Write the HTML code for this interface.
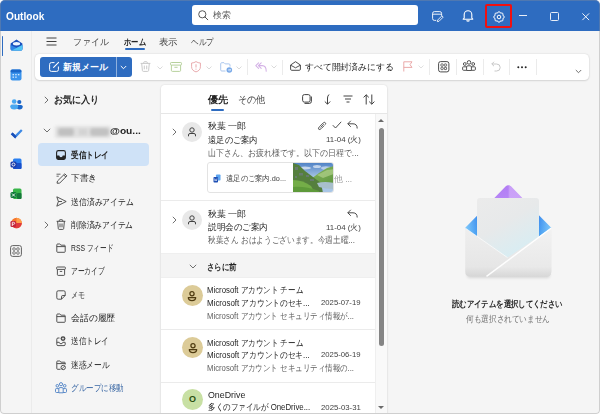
<!DOCTYPE html>
<html lang="ja"><head><meta charset="utf-8">
<style>
*{box-sizing:border-box}
html,body{margin:0;padding:0}
body{width:600px;height:414px;overflow:hidden;position:relative;background:#fdfdfd;font-family:"Liberation Sans",sans-serif;color:#242424}
.a{position:absolute}
.t{position:absolute;white-space:nowrap;line-height:12px;font-size:9.3px}
#win{position:absolute;left:0;top:0;width:600px;height:414px;border-radius:5px 5px 4px 4px;background:#f5f5f5;overflow:hidden}
#title{position:absolute;left:0;top:0;width:600px;height:31px;background:#2e6cc0}
svg{position:absolute;overflow:visible}
.sep{position:absolute;width:1px;background:#ebebeb}
.g{color:#616161}
.b{font-weight:bold}
</style></head><body>
<div id="win">
 <!-- TITLE BAR -->
 <div id="title">
  <div class="t" style="transform:scaleX(1.014);transform-origin:0 50%;--w:38.3;left:5.6px;top:10.8px;color:#fff;font-weight:bold;font-size:10px;line-height:12px">Outlook</div>
  <div class="a" style="left:192px;top:5px;width:226px;height:20px;background:#fff;border-radius:3px"></div>
  <svg style="left:197.5px;top:10px" width="11" height="10.5" viewBox="0 0 11 10.5"><circle cx="4.3" cy="4.3" r="3.6" fill="none" stroke="#505050" stroke-width="0.95"/><path d="M6.9 6.9L9.8 9.8" stroke="#505050" stroke-width="1" stroke-linecap="round"/></svg>
  <div class="t" style="transform:scaleX(0.989);transform-origin:0 50%;--w:17.8;left:212.6px;top:9.3px;color:#616161;font-size:9px">検索</div>
  <!-- note icon -->
  <svg style="left:431.5px;top:10.5px" width="12" height="11" viewBox="0 0 12 11"><path d="M9.6 4.8V2.4Q9.6 0.6 7.8 0.6H2.4Q0.6 0.6 0.6 2.4V7.6Q0.6 9.4 2.4 9.4H4.2M0.6 3.2H9.6" fill="none" stroke="#fff" stroke-width="0.9"/><path d="M5.3 10.6L5.7 9L9.9 4.8L11.2 6.1L7 10.3Z" fill="none" stroke="#fff" stroke-width="0.85" stroke-linejoin="round"/></svg>
  <!-- bell -->
  <svg style="left:462px;top:9px" width="12" height="13" viewBox="0 0 12 13"><path d="M2.2 9V5.5A3.8 3.8 0 0 1 9.8 5.5V9L10.8 10.2H1.2Z" fill="none" stroke="#fff" stroke-width="1.1" stroke-linejoin="round"/><path d="M4.5 11.5Q6 12.8 7.5 11.5" fill="none" stroke="#fff" stroke-width="1.1"/></svg>
  <!-- gear highlight -->
  <div class="a" style="left:485px;top:4px;width:27px;height:24px;border:2.4px solid #f01010;border-radius:2px"></div>
  <svg style="left:493px;top:11px" width="12" height="12" viewBox="0 0 12 12"><path d="M6 0.7Q7 0.7 7.2 1.8Q7.6 2 8 2.2Q9 1.6 9.7 2.3Q10.4 3 9.8 4Q10 4.4 10.2 4.8Q11.3 5 11.3 6Q11.3 7 10.2 7.2Q10 7.6 9.8 8Q10.4 9 9.7 9.7Q9 10.4 8 9.8Q7.6 10 7.2 10.2Q7 11.3 6 11.3Q5 11.3 4.8 10.2Q4.4 10 4 9.8Q3 10.4 2.3 9.7Q1.6 9 2.2 8Q2 7.6 1.8 7.2Q0.7 7 0.7 6Q0.7 5 1.8 4.8Q2 4.4 2.2 4Q1.6 3 2.3 2.3Q3 1.6 4 2.2Q4.4 2 4.8 1.8Q5 0.7 6 0.7Z" fill="none" stroke="#fff" stroke-width="1" stroke-linejoin="round"/><circle cx="6" cy="6" r="1.8" fill="none" stroke="#fff" stroke-width="1"/></svg>
  <!-- window controls -->
  <div class="a" style="left:519px;top:15px;width:8px;height:1.2px;background:#e8eef8"></div>
  <div class="a" style="left:550px;top:12px;width:8.5px;height:8.5px;border:1.1px solid #e8eef8;border-radius:1.5px"></div>
  <svg style="left:581.5px;top:12.5px" width="7.5" height="7.5" viewBox="0 0 7.5 7.5"><path d="M0.4 0.4L7.1 7.1M7.1 0.4L0.4 7.1" stroke="#f0f4fa" stroke-width="1"/></svg>
 </div>

 <!-- LEFT RAIL -->
 <div class="sep" style="left:31px;top:31px;height:382px;background:#ebebeb"></div>
 <div class="a" style="left:1.8px;top:35.5px;width:1.6px;height:20.5px;background:#2e6cc0;border-radius:1px"></div>
 <!-- mail icon -->
 <svg style="left:10px;top:38.5px" width="13" height="12" viewBox="0 0 13 12"><path d="M0.6 4.6L6.5 0.5L12.4 4.6V10Q12.4 11.6 10.8 11.6H2.2Q0.6 11.6 0.6 10Z" fill="#1c52bd"/><ellipse cx="6.5" cy="4.8" rx="3.6" ry="1.7" fill="#eef6ff"/><path d="M0.6 6L6.5 8.8L12.4 6V10Q12.4 11.6 10.8 11.6H2.2Q0.6 11.6 0.6 10Z" fill="#2f86e6"/><path d="M1.6 11.4L12.4 6V10Q12.4 11.6 10.8 11.6H2.2Z" fill="#52c6f6"/></svg>
 <!-- calendar -->
 <svg style="left:10px;top:69px" width="12" height="12" viewBox="0 0 12 12"><rect x="0.5" y="0.5" width="11" height="11" rx="2" fill="#3b93ec"/><rect x="0.5" y="0.5" width="11" height="3" rx="1.5" fill="#1b67c9"/><g fill="#cfe6ff"><rect x="2.5" y="5" width="1.5" height="1.3"/><rect x="5.2" y="5" width="1.5" height="1.3"/><rect x="7.9" y="5" width="1.5" height="1.3"/><rect x="2.5" y="7.5" width="1.5" height="1.3"/><rect x="5.2" y="7.5" width="1.5" height="1.3"/></g></svg>
 <!-- people -->
 <svg style="left:10px;top:99px" width="13" height="11" viewBox="0 0 13 11"><circle cx="9.3" cy="3" r="2.1" fill="#1b67c9"/><path d="M6.5 7.5Q6.5 6 8 6H11Q12.7 6 12.7 7.5Q12.7 10.5 9.5 10.5Q6.5 10.5 6.5 7.5Z" fill="#1b67c9"/><circle cx="4.2" cy="2.5" r="2.3" fill="#4aa8f0"/><path d="M0.3 7.2Q0.3 5.6 2 5.6H6.4Q8.1 5.6 8.1 7.2Q8.1 10.5 4.2 10.5Q0.3 10.5 0.3 7.2Z" fill="#4aa8f0"/></svg>
 <!-- todo check -->
 <svg style="left:10px;top:128px" width="13" height="11" viewBox="0 0 13 11"><path d="M0.8 6.2L2.6 4.4L5.2 7L11 1.2L12.6 2.8L5.2 10.4Z" fill="#3e8ae5"/><path d="M0.8 6.2L2.6 4.4L6.5 8.2L5.2 10.4Z" fill="#1b4fb8"/></svg>
 <!-- outlook -->
 <svg style="left:10px;top:158px" width="12" height="12" viewBox="0 0 12 12"><rect x="3" y="0.5" width="8.5" height="10.5" rx="1.5" fill="#2a7ff0"/><rect x="3" y="5" width="8.5" height="6" rx="1" fill="#1a4fc9"/><rect x="0.5" y="3.5" width="6" height="6" rx="1.5" fill="#1a3aa8"/><circle cx="3.5" cy="6.5" r="1.5" fill="none" stroke="#fff" stroke-width="0.9"/></svg>
 <!-- excel -->
 <svg style="left:10px;top:188px" width="12" height="12" viewBox="0 0 12 12"><rect x="3" y="0.5" width="8.5" height="10.5" rx="1.5" fill="#39b54a"/><rect x="7" y="5" width="4.5" height="6" rx="1" fill="#16773a"/><rect x="0.5" y="4" width="6" height="6" rx="1.5" fill="#117a3a"/><path d="M2 5.5L5 8.5M5 5.5L2 8.5" stroke="#fff" stroke-width="0.9"/></svg>
 <!-- ppt -->
 <svg style="left:10px;top:217px" width="12" height="12" viewBox="0 0 12 12"><circle cx="6.5" cy="6" r="5.3" fill="#f5752b"/><path d="M6.5 0.7A5.3 5.3 0 0 1 11.8 6H6.5Z" fill="#ff9e4a"/><path d="M1.2 6A5.3 5.3 0 0 0 11.8 6Z" fill="#e0393e"/><rect x="0.5" y="4" width="5.5" height="6" rx="1.3" fill="#c4253b"/><path d="M2.3 9V5.3H3.6Q4.7 5.3 4.7 6.3Q4.7 7.3 3.6 7.3H2.3" fill="none" stroke="#fff" stroke-width="0.8"/></svg>
 <!-- apps -->
 <svg style="left:10px;top:245px" width="12" height="12" viewBox="0 0 12 12"><rect x="0.6" y="0.6" width="10.8" height="10.8" rx="2" fill="none" stroke="#616161" stroke-width="1"/><g fill="none" stroke="#616161" stroke-width="0.9"><rect x="2.8" y="2.8" width="2.5" height="2.5" rx="1"/><rect x="6.7" y="2.8" width="2.5" height="2.5" rx="1"/><rect x="2.8" y="6.7" width="2.5" height="2.5" rx="1"/><rect x="6.7" y="6.7" width="2.5" height="2.5" rx="1"/></g></svg>

 <!-- MENU ROW -->
 <svg style="left:46px;top:37px" width="11" height="9" viewBox="0 0 11 9"><path d="M0.5 1H10.5M0.5 4.5H10.5M0.5 8H10.5" stroke="#424242" stroke-width="1"/></svg>
 <div class="t" style="transform:scaleX(0.994);transform-origin:0 50%;--w:35.8;left:72.6px;top:36px;color:#424242">ファイル</div>
 <div class="t b" style="transform:scaleX(0.807);transform-origin:0 50%;--w:21.8;left:123.6px;top:36px;color:#242424">ホーム</div>
 <div class="a" style="left:125px;top:48px;width:20px;height:2px;background:#2e6cc0;border-radius:1px"></div>
 <div class="t" style="transform:scaleX(1.044);transform-origin:0 50%;--w:18.8;left:158.6px;top:36px;color:#424242">表示</div>
 <div class="t" style="transform:scaleX(0.844);transform-origin:0 50%;--w:22.8;left:190.6px;top:36px;color:#424242">ヘルプ</div>

 <!-- RIBBON -->
 <div class="a" style="left:34.5px;top:54px;width:554px;height:26px;background:#fff;border-radius:4.5px;box-shadow:0 0 2px rgba(0,0,0,0.14),0 1px 2px rgba(0,0,0,0.1)"></div>
 <div class="a" style="left:40px;top:57px;width:92px;height:20px;background:#2e6cc0;border-radius:3px"></div>
 <div class="a" style="left:116px;top:57px;width:1px;height:20px;background:#8fb1de"></div>
 <svg style="left:49px;top:62px" width="10" height="10" viewBox="0 0 10 10"><path d="M5.5 0.6H2.4Q0.6 0.6 0.6 2.4V7.6Q0.6 9.4 2.4 9.4H7.6Q9.4 9.4 9.4 7.6V4.5" fill="none" stroke="#fff" stroke-width="1"/><path d="M9.6 0.4L4.6 5.4" stroke="#fff" stroke-width="1.1" stroke-linecap="round"/></svg>
 <div class="t" style="transform:scaleX(1);transform-origin:0 50%;--w:45.0;left:62.6px;top:61px;color:#fff;font-size:9px;font-weight:bold">新規メール</div>
 <svg style="left:120px;top:65px" width="7" height="5" viewBox="0 0 7 5"><path d="M0.8 1L3.5 3.7L6.2 1" fill="none" stroke="#fff" stroke-width="1"/></svg>
 <!-- trash -->
 <svg style="left:140px;top:61px" width="11" height="11" viewBox="0 0 11 11"><path d="M0.6 2.4H10.4M3.7 2.4V1.6Q3.7 0.7 4.6 0.7H6.4Q7.3 0.7 7.3 1.6V2.4M1.7 2.4L2.4 9.5Q2.5 10.4 3.4 10.4H7.6Q8.5 10.4 8.6 9.5L9.3 2.4M4.3 4.6V8.3M6.7 4.6V8.3" fill="none" stroke="#c6c6c6" stroke-width="0.95"/></svg>
 <svg style="left:156.5px;top:66px" width="6" height="4" viewBox="0 0 6 4"><path d="M0.5 0.5L3 3L5.5 0.5" fill="none" stroke="#d0d0d0" stroke-width="0.8"/></svg>
 <!-- archive -->
 <svg style="left:169.5px;top:61.5px" width="12" height="10" viewBox="0 0 12 10"><rect x="0.5" y="0.5" width="11" height="2.6" rx="0.8" fill="none" stroke="#b3cf98" stroke-width="0.95"/><path d="M1.4 3.1V8.4Q1.4 9.4 2.4 9.4H9.6Q10.6 9.4 10.6 8.4V3.1M4.4 5.3H7.6" fill="none" stroke="#b3cf98" stroke-width="0.95"/></svg>
 <!-- shield -->
 <svg style="left:191px;top:61px" width="10" height="11.5" viewBox="0 0 10 11.5"><path d="M5 0.6Q7 2 9.4 2V5.8Q9.4 9.5 5 10.9Q0.6 9.5 0.6 5.8V2Q3 2 5 0.6Z" fill="none" stroke="#e8a6aa" stroke-width="0.95"/><path d="M5 3.3V6.5" stroke="#e8a6aa" stroke-width="1"/><circle cx="5" cy="8.1" r="0.6" fill="#e8a6aa"/></svg>
 <svg style="left:206px;top:66px" width="6" height="4" viewBox="0 0 6 4"><path d="M0.5 0.5L3 3L5.5 0.5" fill="none" stroke="#d0d0d0" stroke-width="0.8"/></svg>
 <!-- move -->
 <svg style="left:219.5px;top:62px" width="12.5" height="11" viewBox="0 0 12.5 11"><path d="M5.5 9H1.8Q0.7 9 0.7 7.9V1.8Q0.7 0.7 1.8 0.7H4L5.2 1.9H8.9Q10 1.9 10 3V4.6" fill="none" stroke="#a8c4ec" stroke-width="0.95"/><circle cx="9.3" cy="8" r="2.8" fill="#7aaae8"/><path d="M8 8H10.6M9.7 7.1L10.6 8L9.7 8.9" fill="none" stroke="#fff" stroke-width="0.7"/></svg>
 <svg style="left:236px;top:66px" width="6" height="4" viewBox="0 0 6 4"><path d="M0.5 0.5L3 3L5.5 0.5" fill="none" stroke="#d0d0d0" stroke-width="0.8"/></svg>
 <div class="sep" style="left:247px;top:59px;height:16px"></div>
 <!-- reply all -->
 <svg style="left:254.5px;top:62px" width="12" height="10" viewBox="0 0 12 10"><path d="M3.6 0.8L0.8 3.6L3.6 6.4M6.2 0.8L3.4 3.6L6.2 6.4M3.4 3.6H7.2Q11.2 3.6 11.2 9.2" fill="none" stroke="#d4b2e6" stroke-width="1.05" stroke-linejoin="round" stroke-linecap="round"/></svg>
 <svg style="left:271px;top:65px" width="6" height="4" viewBox="0 0 6 4"><path d="M0.5 0.5L3 3L5.5 0.5" fill="none" stroke="#d0d0d0" stroke-width="0.8"/></svg>
 <div class="sep" style="left:282px;top:59.5px;height:15px"></div>
 <!-- mark read -->
 <svg style="left:290px;top:61px" width="11" height="10" viewBox="0 0 11 10"><path d="M0.6 4L5.5 0.7L10.4 4V8.2Q10.4 9.3 9.3 9.3H1.7Q0.6 9.3 0.6 8.2Z" fill="none" stroke="#424242" stroke-width="0.95"/><path d="M0.8 4.3L5.5 6.8L10.2 4.3" fill="none" stroke="#424242" stroke-width="0.9"/></svg>
 <div class="t" style="transform:scaleX(0.984);transform-origin:0 50%;--w:88.6;left:304.6px;top:61px;color:#242424">すべて開封済みにする</div>
 <!-- flag -->
 <svg style="left:403px;top:61px" width="10" height="11" viewBox="0 0 10 11"><path d="M0.8 10.5V0.8H9L7 3.6L9 6.4H0.8" fill="none" stroke="#e8a0a0" stroke-width="0.9" stroke-linejoin="round"/></svg>
 <svg style="left:418px;top:65px" width="6" height="4" viewBox="0 0 6 4"><path d="M0.5 0.5L3 3L5.5 0.5" fill="none" stroke="#d8d8d8" stroke-width="0.8"/></svg>
 <div class="sep" style="left:429px;top:59px;height:16px"></div>
 <!-- grid -->
 <svg style="left:437.5px;top:61.3px" width="11.5" height="11.5" viewBox="0 0 11.5 11.5"><rect x="0.6" y="0.6" width="10.3" height="10.3" rx="2" fill="none" stroke="#424242" stroke-width="0.95"/><g fill="none" stroke="#424242" stroke-width="0.8"><rect x="2.9" y="2.9" width="2.3" height="2.3" rx="0.6"/><rect x="6.3" y="2.9" width="2.3" height="2.3" rx="0.6"/><rect x="2.9" y="6.3" width="2.3" height="2.3" rx="0.6"/><rect x="6.3" y="6.3" width="2.3" height="2.3" rx="0.6"/></g></svg>
 <div class="sep" style="left:456px;top:59px;height:16px"></div>
 <!-- people group -->
 <svg style="left:462px;top:60px" width="14" height="12" viewBox="0 0 14 12"><g fill="none" stroke="#424242" stroke-width="0.9"><circle cx="7" cy="2.4" r="1.8"/><circle cx="2.8" cy="4" r="1.4"/><circle cx="11.2" cy="4" r="1.4"/><path d="M4.6 10.5V7Q4.6 5.8 5.8 5.8H8.2Q9.4 5.8 9.4 7V10.5Z"/><path d="M4.6 10.3H1.6Q0.6 10.3 0.6 9.3V7.5Q0.6 6.8 1.4 6.8H4.6M9.4 10.3H12.4Q13.4 10.3 13.4 9.3V7.5Q13.4 6.8 12.6 6.8H9.4"/></g></svg>
 <div class="sep" style="left:483px;top:59px;height:16px"></div>
 <!-- undo -->
 <svg style="left:491px;top:61px" width="10" height="11" viewBox="0 0 10 11"><path d="M3 0.8L0.8 3L3 5.2M0.8 3H5.5Q9.2 3 9.2 6.5Q9.2 10 5.5 10H3.5" fill="none" stroke="#c8c8c8" stroke-width="1"/></svg>
 <div class="sep" style="left:509px;top:59px;height:16px"></div>
 <svg style="left:517px;top:66px" width="10" height="3" viewBox="0 0 10 3"><g fill="#242424"><circle cx="1.3" cy="1.3" r="1"/><circle cx="5" cy="1.3" r="1"/><circle cx="8.7" cy="1.3" r="1"/></g></svg>
 <div class="sep" style="left:536px;top:59px;height:16px"></div>
 <svg style="left:575px;top:69px" width="7" height="5" viewBox="0 0 7 5"><path d="M0.8 1L3.5 3.7L6.2 1" fill="none" stroke="#616161" stroke-width="0.9"/></svg>

 <!-- FOLDER PANE -->
 <svg style="left:44px;top:96px" width="5" height="8" viewBox="0 0 5 8"><path d="M0.8 0.8L4 4L0.8 7.2" fill="none" stroke="#616161" stroke-width="0.9"/></svg>
 <div class="t b" style="transform:scaleX(0.902);transform-origin:0 50%;--w:45.1;left:53.9px;top:94px;font-size:9.5px">お気に入り</div>
 <svg style="left:43px;top:128px" width="8" height="5" viewBox="0 0 8 5"><path d="M0.8 0.8L4 4L7.2 0.8" fill="none" stroke="#616161" stroke-width="0.9"/></svg>
 <div class="a" style="left:54.5px;top:126px;width:56px;height:12px;background:#e0e0e0;filter:blur(1.8px);border-radius:2px"><div class="a" style="left:3px;top:2px;width:16px;height:8px;background:#c0c0c0;border-radius:3px"></div><div class="a" style="left:24px;top:3px;width:8px;height:6px;background:#d2d2d2"></div><div class="a" style="left:35px;top:2px;width:19px;height:8px;background:#c2c2c2;border-radius:3px"></div></div>
 <div class="t b" style="transform:scaleX(1.07);transform-origin:0 50%;--w:30.8;left:109.6px;top:125px;font-size:9.5px">@ou...</div>
 <div class="a" style="left:38px;top:143px;width:111px;height:23px;background:#cfe2f7;border-radius:4px"></div>
 <svg style="left:56px;top:150px" width="10" height="10" viewBox="0 0 10 10"><rect x="0.6" y="0.6" width="8.8" height="8.8" rx="1.8" fill="none" stroke="#242424" stroke-width="1.1"/><path d="M0.6 5.5H3.2Q3.5 7.3 5 7.3Q6.5 7.3 6.8 5.5H9.4V8Q9.4 9.4 8 9.4H2Q0.6 9.4 0.6 8Z" fill="#242424"/></svg>
 <div class="t b" style="transform:scaleX(0.844);transform-origin:0 50%;--w:38.0;left:71.2px;top:149px">受信トレイ</div>
 <svg style="left:55.5px;top:173px" width="12" height="11" viewBox="0 0 12 11"><path d="M1 10.2L1.5 8L8.8 0.8L10.9 2.9L3.6 10.2Z M7.7 1.9L9.8 4" fill="none" stroke="#424242" stroke-width="0.9" stroke-linejoin="round"/><path d="M0.5 1.2H4.5M0.5 3.2H2.8" stroke="#424242" stroke-width="0.8"/></svg>
 <div class="t" style="transform:scaleX(0.967);transform-origin:0 50%;--w:26.1;left:71.3px;top:172.3px">下書き</div>
<svg style="left:56px;top:196.2px" width="11" height="11" viewBox="0 0 11 11"><path d="M0.8 0.8L10.2 5.5L0.8 10.2L2.4 5.5Z M2.4 5.5H6" fill="none" stroke="#424242" stroke-width="0.9" stroke-linejoin="round"/></svg>
 <div class="t" style="transform:scaleX(0.871);transform-origin:0 50%;--w:62.7;left:71.3px;top:195.7px">送信済みアイテム</div>
<svg style="left:56px;top:219.3px" width="10" height="11" viewBox="0 0 10 11"><path d="M0.6 2.3H9.4M3.3 2.3V1.5Q3.3 0.7 4.1 0.7H5.9Q6.7 0.7 6.7 1.5V2.3M1.6 2.3L2.3 9.6Q2.4 10.4 3.2 10.4H6.8Q7.6 10.4 7.7 9.6L8.4 2.3M4 4.5V8.3M6 4.5V8.3" fill="none" stroke="#424242" stroke-width="0.9"/></svg>
 <div class="t" style="transform:scaleX(0.863);transform-origin:0 50%;--w:62.1;left:71.3px;top:219.0px">削除済みアイテム</div>
<svg style="left:56px;top:243.0px" width="10" height="10" viewBox="0 0 10 10"><path d="M0.8 8.5V1.8Q0.8 1 1.6 1H3.8L5 2.2H8.4Q9.2 2.2 9.2 3V8.5Q9.2 9.3 8.4 9.3H1.6Q0.8 9.3 0.8 8.5Z M0.8 3.6H9.2" fill="none" stroke="#424242" stroke-width="0.9"/></svg>
 <div class="t" style="transform:scaleX(0.73);transform-origin:0 50%;--w:42.1;left:71.3px;top:242.0px">RSS フィード</div>
<svg style="left:56px;top:266.3px" width="10" height="10" viewBox="0 0 10 10"><rect x="0.6" y="1" width="8.8" height="2.4" rx="0.8" fill="none" stroke="#424242" stroke-width="0.9"/><path d="M1.4 3.4V8.6Q1.4 9.4 2.2 9.4H7.8Q8.6 9.4 8.6 8.6V3.4M3.8 5.4H6.2" fill="none" stroke="#424242" stroke-width="0.9"/></svg>
 <div class="t" style="transform:scaleX(0.747);transform-origin:0 50%;--w:33.6;left:71.1px;top:265.3px">アーカイブ</div>
<svg style="left:56px;top:289.6px" width="10" height="10" viewBox="0 0 10 10"><path d="M0.8 2.2Q0.8 0.8 2.2 0.8H7.8Q9.2 0.8 9.2 2.2V5.5L5.5 9.2H2.2Q0.8 9.2 0.8 7.8Z M5.5 9.2V6.8Q5.5 5.5 6.8 5.5H9.2" fill="none" stroke="#424242" stroke-width="0.9" stroke-linejoin="round"/></svg>
 <div class="t" style="transform:scaleX(0.778);transform-origin:0 50%;--w:14.0;left:71.1px;top:288.6px">メモ</div>
<svg style="left:56px;top:313.0px" width="10" height="10" viewBox="0 0 10 10"><path d="M0.8 8.5V1.8Q0.8 1 1.6 1H3.8L5 2.2H8.4Q9.2 2.2 9.2 3V8.5Q9.2 9.3 8.4 9.3H1.6Q0.8 9.3 0.8 8.5Z M0.8 3.6H9.2" fill="none" stroke="#424242" stroke-width="0.9"/></svg>
 <div class="t" style="transform:scaleX(0.984);transform-origin:0 50%;--w:44.3;left:71.1px;top:312.0px">会話の履歴</div>
<svg style="left:56px;top:336.3px" width="10" height="10" viewBox="0 0 10 10"><path d="M3.5 2H2Q0.8 2 0.8 3.2V8.4Q0.8 9.6 2 9.6H8Q9.2 9.6 9.2 8.4V6.5 M0.8 6.3H3.2Q3.5 7.8 5 7.8Q6.5 7.8 6.8 6.3H9.2" fill="none" stroke="#424242" stroke-width="0.9"/><circle cx="7" cy="2.6" r="2.4" fill="#424242"/><path d="M7 1.4V3.8M5.8 2.6H8.2" stroke="#fff" stroke-width="0.7"/></svg>
 <div class="t" style="transform:scaleX(0.836);transform-origin:0 50%;--w:37.6;left:71.1px;top:335.3px">送信トレイ</div>
<svg style="left:56px;top:359.6px" width="10" height="10" viewBox="0 0 10 10"><path d="M4.5 9.3H1.6Q0.8 9.3 0.8 8.5V1.8Q0.8 1 1.6 1H3.8L5 2.2H8.4Q9.2 2.2 9.2 3V4.5 M0.8 3.6H9.2" fill="none" stroke="#424242" stroke-width="0.9"/><circle cx="7.2" cy="7.5" r="2.2" fill="none" stroke="#424242" stroke-width="0.9"/><path d="M5.7 9L8.7 6" stroke="#424242" stroke-width="0.8"/></svg>
 <div class="t" style="transform:scaleX(0.858);transform-origin:0 50%;--w:38.6;left:71.1px;top:358.6px">迷惑メール</div>
<svg style="left:44px;top:221px" width="5" height="8" viewBox="0 0 5 8"><path d="M0.8 0.8L4 4L0.8 7.2" fill="none" stroke="#616161" stroke-width="0.9"/></svg>

 <div class="t" style="transform:scaleX(0.838);transform-origin:0 50%;--w:52.8;left:71.1px;top:382px;color:#3d6aa6">グループに移動</div>
 <svg style="left:55px;top:382px" width="12" height="12" viewBox="0 0 12 12"><g fill="none" stroke="#4b7fc4" stroke-width="0.9"><circle cx="6" cy="2.2" r="1.6"/><circle cx="2.3" cy="3.8" r="1.3"/><circle cx="9.7" cy="3.8" r="1.3"/><path d="M3.8 10.8V6.8Q3.8 5.6 5 5.6H7Q8.2 5.6 8.2 6.8V10.8Z"/><path d="M3.8 10.5H1.5Q0.5 10.5 0.5 9.5V7.4Q0.5 6.6 1.3 6.6H3.8M8.2 10.5H10.5Q11.5 10.5 11.5 9.5V7.4Q11.5 6.6 10.7 6.6H8.2"/></g></svg>

 <!-- MESSAGE LIST -->
 <div class="a" style="left:161px;top:85px;width:226px;height:330px;background:#fff;border-radius:3.5px 3.5px 0 0;box-shadow:0 0 2px rgba(0,0,0,0.12),0 1px 2px rgba(0,0,0,0.08)"></div>
 <div class="t b" style="transform:scaleX(1.01);transform-origin:0 50%;--w:20.2;left:207.6px;top:94px;font-size:10px">優先</div>
 <div class="a" style="left:211px;top:109px;width:13px;height:2px;background:#2e6cc0;border-radius:1px"></div>
 <div class="t" style="transform:scaleX(0.913);transform-origin:0 50%;--w:27.4;left:237.6px;top:94px;font-size:10px;color:#424242">その他</div>
 <svg style="left:302px;top:94px" width="10" height="10" viewBox="0 0 10 10"><rect x="0.6" y="0.6" width="7.5" height="7.5" rx="1.8" fill="none" stroke="#424242" stroke-width="1"/><path d="M2.5 9.4H7.4Q9.4 9.4 9.4 7.4V2.5" fill="none" stroke="#424242" stroke-width="1"/></svg>
 <svg style="left:324px;top:94px" width="7" height="11" viewBox="0 0 7 11"><path d="M5 0.5Q3.5 2 3.5 4V10M0.8 7.5L3.5 10.2L6.2 7.5" fill="none" stroke="#424242" stroke-width="1"/></svg>
 <svg style="left:343px;top:95px" width="10" height="8" viewBox="0 0 10 8"><path d="M0.5 1H9.5M2 4H8M3.5 7H6.5" stroke="#424242" stroke-width="1"/></svg>
 <svg style="left:363px;top:94px" width="12" height="11" viewBox="0 0 12 11"><path d="M3.2 10.5V0.8M0.6 3.4L3.2 0.8L5.8 3.4M8.8 0.5V10.2M6.2 7.6L8.8 10.2L11.4 7.6" fill="none" stroke="#424242" stroke-width="1"/></svg>
 <div class="a" style="left:161px;top:113px;width:226px;height:1px;background:#e6e6e6"></div>

 <!-- scrollbar -->
 <div class="a" style="left:375px;top:114px;width:12px;height:301px;background:#f9f9f9;border-left:1px solid #efefef"></div>
 <svg style="left:378px;top:119px" width="6" height="3" viewBox="0 0 6 3"><path d="M0 3L3 0L6 3Z" fill="#6b6b6b"/></svg>
 <div class="a" style="left:379px;top:128px;width:4.5px;height:218px;background:#858585;border-radius:3px"></div>
 <svg style="left:378px;top:406px" width="6" height="3" viewBox="0 0 6 3"><path d="M0 0L6 0L3 3Z" fill="#6b6b6b"/></svg>

 <!-- msg 1 -->
 <svg style="left:172px;top:128px" width="5" height="8" viewBox="0 0 5 8"><path d="M0.8 0.8L4 4L0.8 7.2" fill="none" stroke="#616161" stroke-width="0.9"/></svg>
 <div class="a" style="left:182px;top:122px;width:20px;height:20px;border-radius:50%;background:#e8e8e8"></div>
 <svg style="left:187px;top:127px" width="10" height="10" viewBox="0 0 10 10"><circle cx="5" cy="3" r="2.2" fill="none" stroke="#424242" stroke-width="1"/><path d="M1.5 9.3V8Q1.5 6.5 3 6.5H7Q8.5 6.5 8.5 8V9.3" fill="none" stroke="#424242" stroke-width="1"/></svg>
 <div class="t" style="transform:scaleX(0.995);transform-origin:0 50%;--w:38.4;left:207.6px;top:119.5px;color:#242424">秋葉 一郎</div>
 <svg style="left:317px;top:120.5px" width="10" height="10" viewBox="0 0 10 10"><g transform="rotate(45 5 5)"><path d="M6.3 3V7.2Q6.3 9.6 5 9.6Q3.7 9.6 3.7 7.2V1.8Q3.7 0.4 5 0.4Q6.3 0.4 6.3 1.8" fill="none" stroke="#424242" stroke-width="0.85"/><path d="M5 2.5V7" stroke="#424242" stroke-width="0.8"/></g></svg>
 <svg style="left:332px;top:121px" width="10" height="8" viewBox="0 0 10 8"><path d="M0.8 4.2L3.5 7L9.2 0.8" fill="none" stroke="#424242" stroke-width="0.95"/></svg>
 <svg style="left:347px;top:120px" width="11" height="9" viewBox="0 0 11 9"><path d="M3.8 0.8L0.8 3.8L3.8 6.8M0.8 3.8H6Q10.2 3.8 10.2 8.5" fill="none" stroke="#424242" stroke-width="0.95"/></svg>
 <div class="t" style="transform:scaleX(0.922);transform-origin:0 50%;--w:49.8;left:207.6px;top:133.5px;color:#242424">遠足のご案内</div>
 <div class="t" style="transform:scaleX(0.982);transform-origin:0 50%;--w:34.8;left:325.6px;top:134px;font-size:8px;color:#424242">11-04 (火)</div>
 <div class="t" style="transform:scaleX(0.888);transform-origin:0 50%;--w:150.8;left:207.6px;top:146.5px;color:#616161;">山下さん、お疲れ様です。以下の日程で...</div>
 <div class="a" style="left:207px;top:162px;width:127px;height:31px;border:1px solid #e3e3e3;border-radius:3px;overflow:hidden;background:#fff">
  <svg style="left:85px;top:-1px" width="41" height="31" viewBox="0 0 41 31"><defs><linearGradient id="sky" x1="0" y1="0" x2="0" y2="1"><stop offset="0" stop-color="#4c7fc4"/><stop offset="0.5" stop-color="#a9c6e6"/></linearGradient><linearGradient id="mt" x1="0" y1="0" x2="1" y2="1"><stop offset="0" stop-color="#8dbb62"/><stop offset="1" stop-color="#5f9640"/></linearGradient></defs><rect width="41" height="31" fill="url(#sky)"/><ellipse cx="12" cy="6" rx="6" ry="1.5" fill="#fff" opacity="0.6"/><ellipse cx="24" cy="4.5" rx="4" ry="1.5" fill="#fff" opacity="0.6"/><ellipse cx="33" cy="6" rx="5" ry="1.8" fill="#e8f0f8" opacity="0.6"/><path d="M14 20L26 11L34 6L41 4V22H14Z" fill="url(#mt)"/><path d="M24 13L34 8L41 7V12L30 16Z" fill="#b0d08a" opacity="0.7"/><path d="M0 1L6 3L12 9L20 15L28 21L30 31H0Z" fill="#557f3e"/><g fill="#6e7a80" opacity="0.75"><rect x="2" y="5" width="3" height="3"/><rect x="6" y="11" width="4" height="2.5"/><rect x="13" y="13" width="3" height="2"/><rect x="17" y="17" width="4" height="2"/><rect x="2" y="14" width="2" height="2"/></g><path d="M24 21Q32 19 41 21V27Q33 27 26 25Z" fill="#a8bfcc"/><path d="M0 18Q10 18 18 24L22 31H0Z" fill="#74ad48"/><path d="M0 25Q12 24 26 29V31H0Z" fill="#5e9a3a"/></svg>
 </div>
 <svg style="left:213px;top:174px" width="8" height="9" viewBox="0 0 8 9"><rect x="3" y="0.5" width="4.5" height="6" rx="0.8" fill="#5ba4f0"/><rect x="0.5" y="3" width="4.5" height="5.5" rx="0.8" fill="#1f4fb4"/><path d="M1.5 4.5L2 7L2.7 5.5L3.4 7L4 4.5" fill="none" stroke="#fff" stroke-width="0.5"/></svg>
 <div class="t" style="transform:scaleX(0.912);transform-origin:0 50%;--w:60.0;left:226.3px;top:172.5px;font-size:8px;color:#424242">遠足のご案内.do...</div>
 <div class="t" style="transform:scaleX(0.981);transform-origin:0 50%;--w:18.1;left:334.3px;top:172.5px;font-size:8.5px;color:#9e9e9e">他 ...</div>
 <div class="a" style="left:161px;top:200px;width:214px;height:1px;background:#ebebeb"></div>

 <!-- msg 2 -->
 <svg style="left:172px;top:215.5px" width="5" height="8" viewBox="0 0 5 8"><path d="M0.8 0.8L4 4L0.8 7.2" fill="none" stroke="#616161" stroke-width="0.9"/></svg>
 <div class="a" style="left:182px;top:209.5px;width:20px;height:20px;border-radius:50%;background:#e8e8e8"></div>
 <svg style="left:187px;top:214.5px" width="10" height="10" viewBox="0 0 10 10"><circle cx="5" cy="3" r="2.2" fill="none" stroke="#424242" stroke-width="1"/><path d="M1.5 9.3V8Q1.5 6.5 3 6.5H7Q8.5 6.5 8.5 8V9.3" fill="none" stroke="#424242" stroke-width="1"/></svg>
 <div class="t" style="transform:scaleX(0.995);transform-origin:0 50%;--w:38.4;left:207.6px;top:208px;color:#242424">秋葉 一郎</div>
 <svg style="left:347px;top:209px" width="11" height="9" viewBox="0 0 11 9"><path d="M3.8 0.8L0.8 3.8L3.8 6.8M0.8 3.8H6Q10.2 3.8 10.2 8.5" fill="none" stroke="#424242" stroke-width="0.95"/></svg>
 <div class="t" style="transform:scaleX(0.949);transform-origin:0 50%;--w:59.8;left:207.6px;top:221px;color:#242424">説明会のご案内</div>
 <div class="t" style="transform:scaleX(0.982);transform-origin:0 50%;--w:34.8;left:325.6px;top:221.5px;font-size:8px;color:#424242">11-04 (火)</div>
 <div class="t" style="transform:scaleX(0.852);transform-origin:0 50%;--w:146.8;left:207.6px;top:233.5px;color:#616161;">秋葉さん おはようございます。今週土曜...</div>

 <!-- section -->
 <div class="a" style="left:161px;top:253px;width:214px;height:24.5px;background:#f4f4f4;border-top:1px solid #efefef;border-bottom:1px solid #efefef"></div>
 <svg style="left:188.5px;top:263.5px" width="8" height="5" viewBox="0 0 8 5"><path d="M0.8 0.8L4 4L7.2 0.8" fill="none" stroke="#616161" stroke-width="0.9"/></svg>
 <div class="t b" style="transform:scaleX(0.828);transform-origin:0 50%;--w:29.8;left:206.6px;top:260.5px;font-size:8.5px">さらに前</div>
 <div class="a" style="left:181.5px;top:285px;width:21px;height:21px;border-radius:50%;background:#dccb98"></div>
<svg style="left:187px;top:290.5px" width="10" height="10" viewBox="0 0 10 10"><circle cx="5" cy="2.8" r="2.1" fill="none" stroke="#4f3b10" stroke-width="1.25"/><path d="M1.3 6.6H8.7Q8.7 9.6 5 9.6Q1.3 9.6 1.3 6.6Z" fill="none" stroke="#4f3b10" stroke-width="1.25" stroke-linejoin="round"/></svg>
<div class="t" style="transform:scaleX(0.836);transform-origin:0 50%;--w:96.1;left:207.3px;top:284px;color:#242424">Microsoft アカウント チーム</div>
<div class="t" style="transform:scaleX(0.855);transform-origin:0 50%;--w:102.6;left:207.3px;top:296.5px;color:#242424;">Microsoft アカウントのセキ...</div>
<div class="t" style="transform:scaleX(0.965);transform-origin:0 50%;--w:39.5;left:320.6px;top:297px;font-size:8px;color:#424242">2025-07-19</div>
<div class="t" style="transform:scaleX(0.832);transform-origin:0 50%;--w:146.9;left:207.3px;top:309.5px;color:#616161;">Microsoft アカウント セキュリティ情報が...</div>
<div class="a" style="left:161px;top:329px;width:214px;height:1px;background:#ebebeb"></div>
<div class="a" style="left:181.5px;top:337px;width:21px;height:21px;border-radius:50%;background:#dccb98"></div>
<svg style="left:187.5px;top:342.5px" width="10" height="10" viewBox="0 0 10 10"><circle cx="5" cy="2.8" r="2.1" fill="none" stroke="#4f3b10" stroke-width="1.25"/><path d="M1.3 6.6H8.7Q8.7 9.6 5 9.6Q1.3 9.6 1.3 6.6Z" fill="none" stroke="#4f3b10" stroke-width="1.25" stroke-linejoin="round"/></svg>
<div class="t" style="transform:scaleX(0.836);transform-origin:0 50%;--w:96.1;left:207.3px;top:337px;color:#242424">Microsoft アカウント チーム</div>
<div class="t" style="transform:scaleX(0.855);transform-origin:0 50%;--w:102.6;left:207.3px;top:348.6px;color:#242424;">Microsoft アカウントのセキ...</div>
<div class="t" style="transform:scaleX(0.965);transform-origin:0 50%;--w:39.5;left:320.6px;top:349.2px;font-size:8px;color:#424242">2025-06-19</div>
<div class="t" style="transform:scaleX(0.832);transform-origin:0 50%;--w:146.9;left:207.3px;top:361.6px;color:#616161;">Microsoft アカウント セキュリティ情報の...</div>
<div class="a" style="left:161px;top:381.5px;width:214px;height:1px;background:#ebebeb"></div>
<div class="a" style="left:182px;top:388.5px;width:21px;height:21px;border-radius:50%;background:#c8e0a4"></div>
<div class="t" style="left:182px;top:393px;width:21px;text-align:center;font-size:9px;font-weight:bold;color:#2a4f10">O</div>
<div class="t" style="transform:scaleX(0.95);transform-origin:0 50%;--w:37.3;left:207.6px;top:388.6px;color:#242424">OneDrive</div>
<div class="t" style="transform:scaleX(0.84);transform-origin:0 50%;--w:102.2;left:207.6px;top:401px;color:#242424;">多くのファイルが OneDrive...</div>
<div class="t" style="transform:scaleX(0.973);transform-origin:0 50%;--w:39.8;left:320.6px;top:401.5px;font-size:8px;color:#424242">2025-03-31</div>


 <!-- READING PANE -->
 <svg style="left:464px;top:184px" width="89" height="96" viewBox="0 0 89 96">
  <defs>
   <linearGradient id="bk" x1="0" y1="0" x2="0" y2="1"><stop offset="0" stop-color="#b27cf4"/><stop offset="0.25" stop-color="#b88af6"/><stop offset="0.33" stop-color="#3a86ec"/><stop offset="1" stop-color="#4fb0f6"/></linearGradient>
   <linearGradient id="pk" x1="0" y1="0" x2="1" y2="0"><stop offset="0.45" stop-color="#a970f0" stop-opacity="0"/><stop offset="0.55" stop-color="#e0c0fb" stop-opacity="0.5"/></linearGradient>
   <linearGradient id="pap" x1="0" y1="0" x2="0.5" y2="1"><stop offset="0" stop-color="#ebebeb"/><stop offset="0.45" stop-color="#e7e9ea"/><stop offset="1" stop-color="#d4eef5"/></linearGradient>
   <linearGradient id="fl" x1="0" y1="0" x2="0" y2="1"><stop offset="0" stop-color="#eeeeee"/><stop offset="0.8" stop-color="#e6e6e6"/><stop offset="1" stop-color="#d6d6d6"/></linearGradient>
   <linearGradient id="fr" x1="0" y1="0" x2="0" y2="1"><stop offset="0" stop-color="#f2f2f2"/><stop offset="0.8" stop-color="#e9e9e9"/><stop offset="1" stop-color="#d8d8d8"/></linearGradient>
   <linearGradient id="bkh" x1="0" y1="0" x2="1" y2="0"><stop offset="0" stop-color="#9be0ff" stop-opacity="0.7"/><stop offset="0.15" stop-color="#9be0ff" stop-opacity="0"/><stop offset="0.85" stop-color="#9be0ff" stop-opacity="0"/><stop offset="1" stop-color="#9be0ff" stop-opacity="0.7"/></linearGradient>
   <filter id="sh" x="-0.2" y="-0.5" width="1.4" height="2"><feGaussianBlur stdDeviation="1.5"/></filter>
  </defs>
  <rect x="3" y="88" width="83" height="6" rx="3" fill="#000" opacity="0.12" filter="url(#sh)"/>
  <path d="M1.2 44L41.5 2.6Q44.3 0 47.1 2.6L87.3 44L86 46V75H2.5V46Z" fill="url(#bk)"/><path d="M1.2 44L41.5 2.6Q44.3 0 47.1 2.6L87.3 44L86 46V75H2.5V46Z" fill="url(#bkh)"/>
  <path d="M30 14L41.5 2.6Q44.3 0 47.1 2.6L58.5 14Z" fill="url(#pk)"/>
  <rect x="13" y="14" width="62" height="72" rx="3" fill="url(#pap)"/>
  <path d="M1.2 44L43.5 73.6L87.3 44V87.4Q87.3 92.4 82.3 92.4H6.2Q1.2 92.4 1.2 87.4Z" fill="url(#fl)"/>
  <path d="M87.3 44V87.4Q87.3 92.4 82.3 92.4H22.5Z" fill="url(#fr)"/>
  <path d="M87.3 44L22.5 92.4" stroke="#ffffff" stroke-width="1.4" opacity="0.95"/>
  <path d="M1.2 44L43.5 73.6" stroke="#ffffff" stroke-width="0.9" opacity="0.7"/>
 </svg>
 <div class="t b" style="transform:scaleX(0.819);transform-origin:0 50%;--w:110.5;left:452.4px;top:298px;font-size:8.5px;color:#242424">読むアイテムを選択してください</div>
 <div class="t" style="transform:scaleX(0.849);transform-origin:0 50%;--w:84.1;left:466.0px;top:313px;font-size:8.5px;color:#707070">何も選択されていません</div>
 <div class="a" style="left:0;top:31px;width:600px;height:383px;border:1px solid #cfcfcf;border-top:none;border-radius:0 0 4px 4px"></div>
 <div class="a" style="left:0;top:0;width:600px;height:31px;border:1px solid rgba(120,135,160,0.45);border-bottom:none;border-radius:5px 5px 0 0"></div>
</div>
<script>
(function(){var els=document.querySelectorAll('.t');for(var i=0;i<els.length;i++){var e=els[i];var w=parseFloat(getComputedStyle(e).getPropertyValue('--w'));if(!w)continue;e.style.transform='none';var r=document.createRange();r.selectNodeContents(e);var n=r.getBoundingClientRect().width;if(n>0){var s=w/n;if(s>0.4&&s<1.8){e.style.transformOrigin='0 50%';e.style.transform='scaleX('+s.toFixed(3)+')';}}}})();
</script>
</body></html>
